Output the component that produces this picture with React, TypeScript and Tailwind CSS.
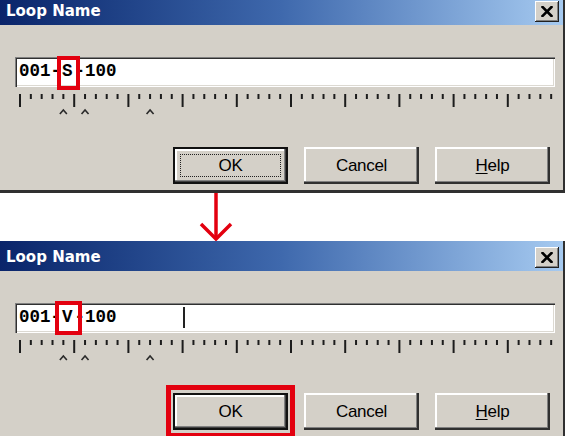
import React from "react";

const TICKS = Array.from({ length: 50 }, (_, i) => i);
const CARETS = [4, 6, 12];
const PITCH = 10.84;

function CloseButton() {
  return (
    <div className="w-[24px] h-[21px] bg-[#d4d0c8] flex items-center justify-center shadow-[inset_-1px_-1px_#202020,inset_1px_1px_#ffffff,inset_-2px_-2px_#808080]">
      <svg width="12" height="11" viewBox="0 0 12 11">
        <path d="M1.5 1 L10.5 10 M10.5 1 L1.5 10" stroke="#000" strokeWidth="2.6" strokeLinecap="square" />
      </svg>
    </div>
  );
}

function Ruler() {
  return (
    <svg width="540" height="22" viewBox="0 0 540 22" className="mt-[7px] block">
      {TICKS.map((i) => {
        const x = 5 + i * PITCH;
        const long = i % 5 === 0;
        return <rect key={i} x={x - 1} y={0} width={2} height={long ? 13 : 5} fill="#1c1c1c" />;
      })}
      {CARETS.map((i) => {
        const x = 5 + i * PITCH;
        return (
          <polyline
            key={i}
            points={`${x - 3.5},20 ${x},16 ${x + 3.5},20`}
            fill="none"
            stroke="#2a2a2a"
            strokeWidth="1.6"
          />
        );
      })}
    </svg>
  );
}

type ButtonProps = {
  children: React.ReactNode;
  isDefault?: boolean;
  focused?: boolean;
  highlighted?: boolean;
};

function WinButton({ children, isDefault, focused, highlighted }: ButtonProps) {
  return (
    <div className="relative">
      <div
        className={
          isDefault
            ? "relative w-[115px] h-[37px] bg-[#d4d0c8] border-2 border-[#111111] flex items-center justify-center shadow-[inset_-1px_-1px_#404040,inset_-2px_-2px_#808080,inset_2px_2px_#ffffff]"
            : "relative w-[115px] h-[37px] bg-[#d4d0c8] flex items-center justify-center shadow-[inset_-2px_-2px_#303030,inset_-3px_-3px_#808080,inset_2px_2px_#ffffff]"
        }
      >
        {focused && (
          <div className="absolute left-[5px] top-[5px] right-[5px] bottom-[5px] border border-dotted border-[#222222]" />
        )}
        <span className="text-[17px] tracking-[-0.3px] text-black leading-none font-['Liberation_Sans',Arial,sans-serif]">
          {children}
        </span>
      </div>
      {highlighted && (
        <div className="absolute -left-[7px] -top-[8px] w-[129px] h-[53px] border-[5px] border-[#e3000f]" />
      )}
    </div>
  );
}

type DialogProps = {
  letter: string;
  after?: boolean;
  className?: string;
};

function LoopNameDialog({ letter, after, className }: DialogProps) {
  return (
    <div
      className={`w-[565px] h-[198px] shrink-0 bg-[#d4d0c8] flex flex-col border-r-2 border-r-[#303030] border-b-[3px] border-b-[#303030] ${className ?? ""}`}
    >
      <div className="h-[30px] shrink-0 flex items-center justify-between pl-[6px] pr-[4px] pt-[3px] bg-gradient-to-r from-[#0a246a] via-[#3f69ad] to-[#a6caf0]">
        <span className="text-white font-bold text-[15px] leading-none font-['DejaVu_Sans',Verdana,sans-serif]">
          Loop Name
        </span>
        <CloseButton />
      </div>
      <div className="flex-1 flex flex-col px-[15px] pt-[32px]">
        <div className="relative w-[540px] h-[30px] bg-white flex items-center pl-[4px] shadow-[inset_1px_1px_#808080,inset_2px_2px_#303030,inset_-1px_-1px_#ffffff,inset_-2px_-2px_#dcd9d2]">
          <div className="flex items-center text-[17.5px] leading-none font-bold text-black whitespace-pre font-['Liberation_Mono','Courier_New',monospace]">
            <span>001</span>
            <span>-</span>
            <span className="ml-[1px]">{letter}</span>
            <span className="ml-[2px]">-</span>
            <span>100</span>
          </div>
          {after ? (
            <>
              <div className="absolute left-[40px] -top-[2px] w-[27px] h-[34px] border-4 border-[#e3000f]" />
              <div className="absolute left-[168px] top-[4px] w-[2px] h-[21px] bg-[#222222]" />
            </>
          ) : (
            <div className="absolute left-[42px] -top-[1px] w-[23px] h-[34px] border-4 border-[#e3000f]" />
          )}
        </div>
        <Ruler />
        <div className="flex gap-[16px] ml-[158px] mt-[31px]">
          <WinButton isDefault focused={!after} highlighted={after}>
            OK
          </WinButton>
          <WinButton>Cancel</WinButton>
          <WinButton>
            <span className="underline underline-offset-2 decoration-1">H</span>elp
          </WinButton>
        </div>
      </div>
    </div>
  );
}

export default function App() {
  return (
    <div className="w-[567px] h-[436px] overflow-hidden bg-white flex flex-col">
      <LoopNameDialog letter="S" className="-mt-[5px]" />
      <div className="h-[48px] shrink-0">
        <svg width="567" height="48" viewBox="0 0 567 48" className="block">
          <path d="M216 0 L216 45" stroke="#e3000f" strokeWidth="3.5" />
          <path d="M201 31 L216 46 L231 31" fill="none" stroke="#e3000f" strokeWidth="3.5" />
        </svg>
      </div>
      <LoopNameDialog letter="V" after />
    </div>
  );
}
